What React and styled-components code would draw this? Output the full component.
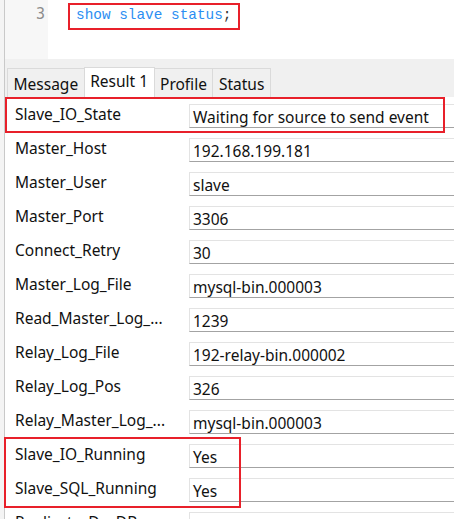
import React from "react";
import styled, { createGlobalStyle } from "styled-components";

const Global = createGlobalStyle`
  html, body { margin: 0; padding: 0; background: #ffffff; overflow: hidden; }
  body { font-family: "Noto Sans", "Open Sans", sans-serif; }
`;

const Frame = styled.div`
  position: relative;
  width: 454px;
  height: 519px;
  overflow: hidden;
  display: flex;
  background: #f4f4f4;
  padding-left: 4px;
  box-sizing: border-box;
`;

const Main = styled.div`
  flex: 1;
  display: flex;
  flex-direction: column;
  border-left: 1px solid #c9c9c9;
  background: #ffffff;
  min-width: 0;
`;

const Editor = styled.div`
  height: 59px;
  display: flex;
  flex-shrink: 0;
`;

const Gutter = styled.div`
  width: 43px;
  background: #f7f7f7;
  box-sizing: border-box;
  padding: 4px 3px 0 0;
  text-align: right;
  font-family: "DejaVu Sans Mono", monospace;
  font-size: 15px;
  line-height: 20px;
  color: #8c8c8c;
`;

const Code = styled.div`
  flex: 1;
  padding: 5px 0 0 28px;
  font-family: "Liberation Mono", monospace;
  font-size: 14.4px;
  line-height: 20px;
  color: #2b8ef2;
  white-space: pre;
`;

const Punct = styled.span`
  color: #333333;
`;

const TabBar = styled.div`
  height: 38px;
  flex-shrink: 0;
  background: #f0f0f0;
  display: flex;
  align-items: flex-end;
  padding-left: 2px;
`;

const Tab = styled.div`
  box-sizing: border-box;
  height: ${(p) => (p.$active ? 30 : 29)}px;
  padding: ${(p) => (p.$active ? "2px 5.5px 0" : "4px 5.5px 0")};
  background: ${(p) => (p.$active ? "#ffffff" : "#f0f0f0")};
  border: 1px solid #dadada;
  border-bottom: none;
  margin-right: -1px;
  font-size: 15.5px;
  line-height: 22px;
  color: #111111;
`;

const Grid = styled.div`
  display: flex;
  flex-direction: column;
`;

const Row = styled.div`
  height: 34px;
  display: grid;
  grid-template-columns: 184px 1fr;
  flex-shrink: 0;
`;

const Label = styled.div`
  padding-left: 10px;
  font-size: 15.5px;
  line-height: 34px;
  color: #111111;
  white-space: nowrap;
  overflow: hidden;
`;

const ValueBox = styled.div`
  margin-top: 7px;
  height: 24px;
  width: 320px;
  box-sizing: border-box;
  border-top: 1px solid #e3e3e3;
  border-left: 1px solid #e3e3e3;
  border-bottom: 1px solid #a3a3a3;
  padding-left: 3px;
  font-size: 15.5px;
  line-height: 24px;
  color: #111111;
  white-space: nowrap;
`;

const Mark = styled.div`
  position: absolute;
  left: ${(p) => p.$x}px;
  top: ${(p) => p.$y}px;
  width: ${(p) => p.$w}px;
  height: ${(p) => p.$h}px;
  box-sizing: border-box;
  border: 2px solid #e8202a;
  pointer-events: none;
`;

const rows = [
  ["Slave_IO_State", "Waiting for source to send event"],
  ["Master_Host", "192.168.199.181"],
  ["Master_User", "slave"],
  ["Master_Port", "3306"],
  ["Connect_Retry", "30"],
  ["Master_Log_File", "mysql-bin.000003"],
  ["Read_Master_Log_...", "1239"],
  ["Relay_Log_File", "192-relay-bin.000002"],
  ["Relay_Log_Pos", "326"],
  ["Relay_Master_Log_...", "mysql-bin.000003"],
  ["Slave_IO_Running", "Yes"],
  ["Slave_SQL_Running", "Yes"],
  ["Replicate_Do_DB", ""],
];

const tabs = ["Message", "Result 1", "Profile", "Status"];

export default function App() {
  return (
    <>
      <Global />
      <Frame>
        <Main>
          <Editor>
            <Gutter>3</Gutter>
            <Code>
              show slave status<Punct>;</Punct>
            </Code>
          </Editor>
          <TabBar>
            {tabs.map((t) => (
              <Tab key={t} $active={t === "Result 1"}>
                {t}
              </Tab>
            ))}
          </TabBar>
          <Grid>
            {rows.map(([k, v]) => (
              <Row key={k}>
                <Label>{k}</Label>
                <ValueBox>{v}</ValueBox>
              </Row>
            ))}
          </Grid>
        </Main>
        <Mark $x={68} $y={3} $w={172} $h={27} />
        <Mark $x={5} $y={97} $w={440} $h={36} />
        <Mark $x={4} $y={437} $w={237} $h={71} />
      </Frame>
    </>
  );
}
